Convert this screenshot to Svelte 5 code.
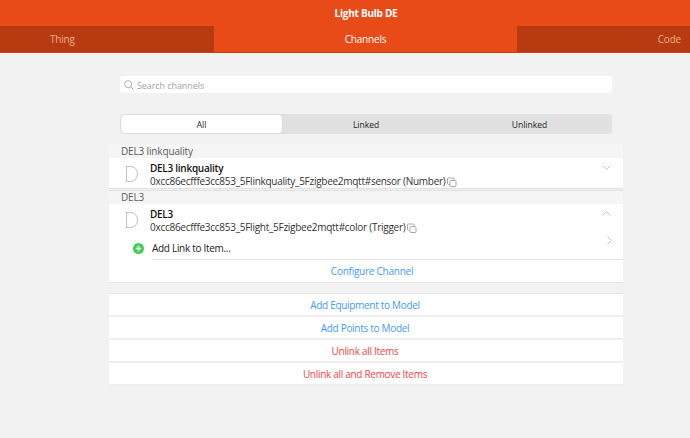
<script>
  const tabs = [
    { label: 'Thing', cls: 'thing' },
    { label: 'Channels', cls: 'active' },
    { label: 'Code', cls: 'code' }
  ];
  const actions = [
    { label: 'Add Equipment to Model', red: false },
    { label: 'Add Points to Model', red: false },
    { label: 'Unlink all Items', red: true },
    { label: 'Unlink all and Remove Items', red: true }
  ];
</script>

{#snippet copyIcon()}
  <svg class="copy" width="10" height="10" viewBox="0 0 10 10" fill="none" stroke="#a8a8a8" stroke-width="1">
    <path d="M2.5 7.5H1.5a1 1 0 0 1-1-1V2a1 1 0 0 1 1-1H6a1 1 0 0 1 1 1v1" />
    <rect x="3" y="3.5" width="6" height="6" rx="1" />
  </svg>
{/snippet}

{#snippet dIcon()}
  <svg class="d" width="14" height="18" viewBox="0 0 14 18" fill="none" stroke="#c4c4c4" stroke-width="1.1">
    <path d="M1.5 1.5h3.5c4.5 0 7.5 3 7.5 7.5s-3 7.5-7.5 7.5H1.5z" />
  </svg>
{/snippet}

<div class="page">
  <header class="title">Light Bulb DE</header>
  <nav class="tabs">
    {#each tabs as t}
      <div class="tab {t.cls}"><span>{t.label}</span></div>
    {/each}
  </nav>

  <div class="search">
    <svg width="10" height="10" viewBox="0 0 10 10" fill="none" stroke="#a3a3a3" stroke-width="0.9">
      <circle cx="4.2" cy="4.2" r="3.5" />
      <path d="M6.8 6.8L9.6 9.6" />
    </svg>
    <span>Search channels</span>
  </div>

  <div class="segments">
    <div class="seg on">All</div>
    <div class="seg">Linked</div>
    <div class="seg">Unlinked</div>
  </div>

  <section class="list">
    <div class="group first">DEL3 linkquality</div>
    <div class="row one">
      {@render dIcon()}
      <div class="txt">
        <div class="name">DEL3 linkquality</div>
        <div class="uid">0xcc86ecfffe3cc853_5Flinkquality_5Fzigbee2mqtt#sensor (Number) {@render copyIcon()}</div>
      </div>
      <svg class="chev" width="9" height="5" viewBox="0 0 9 5" fill="none" stroke="#c8c8c8"><path d="M.5.5l4 4 4-4" /></svg>
    </div>
    <div class="group second">DEL3</div>
    <div class="row two">
      {@render dIcon()}
      <div class="txt">
        <div class="name">DEL3</div>
        <div class="uid">0xcc86ecfffe3cc853_5Flight_5Fzigbee2mqtt#color (Trigger) {@render copyIcon()}</div>
      </div>
      <svg class="chev" width="9" height="5" viewBox="0 0 9 5" fill="none" stroke="#c8c8c8"><path d="M.5 4.5l4-4 4 4" /></svg>
    </div>
    <div class="add">
      <svg width="11" height="11" viewBox="0 0 11 11">
        <circle cx="5.5" cy="5.5" r="5.5" fill="#3bd14f" />
        <path d="M5.5 2.8v5.4M2.8 5.5h5.4" stroke="#fff" stroke-width="1.4" />
      </svg>
      <span>Add Link to Item...</span>
      <svg class="right" width="5" height="9" viewBox="0 0 5 9" fill="none" stroke="#c8c8c8"><path d="M.5.5l4 4-4 4" /></svg>
    </div>
    <div class="configure"><span>Configure Channel</span></div>
  </section>

  <section class="actions">
    {#each actions as a}
      <div class="action" class:red={a.red}>{a.label}</div>
    {/each}
  </section>
</div>

<style>
  :global(body) {
    margin: 0;
    background: #f2f2f2;
  }
  .page {
    width: 690px;
    height: 438px;
    overflow: hidden;
    background: #f2f2f2;
    font-family: "Open Sans", "Noto Sans", sans-serif;
    font-size: 10px;
    color: #1c1c1c;
  }
  .title {
    height: 26px;
    background: #e84b17;
    color: #fff;
    font-weight: 700;
    font-size: 10px;
    letter-spacing: -0.25px;
    line-height: 26px;
    text-align: center;
    padding-left: 42px;
    box-sizing: border-box;
  }
  .tabs {
    display: grid;
    grid-template-columns: 214px 303px 173px;
    height: 27px;
    border-bottom: 1px solid #cf4010;
    box-sizing: border-box;
  }
  .tab {
    display: flex;
    align-items: center;
    font-size: 10px;
    letter-spacing: -0.2px;
    background: #b83a11;
    color: #e8b08c;
  }
  .thing { padding-left: 50px; }
  .active {
    justify-content: center;
    background: #e84b17;
    color: #fff;
  }
  .code {
    justify-content: flex-end;
    padding-right: 9px;
  }
  .search {
    display: flex;
    align-items: center;
    gap: 3px;
    height: 17px;
    margin: 23px 78px 0 120px;
    padding-left: 4px;
    padding-top: 1px;
    box-sizing: border-box;
    background: #fff;
    border-radius: 3px;
    color: #a3a3a3;
    font-size: 9px;
    letter-spacing: -0.08px;
  }
  .segments {
    display: grid;
    grid-template-columns: 163px 1fr 163px;
    height: 20px;
    margin: 21px 78px 0 120px;
    padding: 1px;
    box-sizing: border-box;
    background: #e1e1e1;
    border-radius: 4px;
    font-size: 8.5px;
    color: #222;
  }
  .seg {
    display: flex;
    align-items: center;
    justify-content: center;
  }
  .seg.on {
    background: #fff;
    border-radius: 3px;
    box-shadow: 0 0 1px #aaa;
    margin-right: 2px;
  }
  .list {
    margin: 10px 67px 0 109px;
  }
  .group {
    background: #f5f5f5;
    color: #5c5c5c;
    line-height: 14px;
    font-size: 10px;
    letter-spacing: -0.15px;
    padding-left: 12px;
    height: 14px;
  }
  .second {
    height: 13px;
    line-height: 12px;
    border-top: 1px solid #e0e0e0;
    margin-top: 1px;
  }
  .row {
    display: flex;
    background: #fff;
    position: relative;
    padding-left: 16px;
    box-sizing: border-box;
  }
  .row.one {
    height: 31px;
    border-bottom: 1px solid #e0e0e0;
  }
  .row.two { height: 33px; }
  .d { margin-top: 7px; }
  .txt {
    margin-left: 11px;
    padding-top: 3px;
  }
  .name {
    font-weight: 600;
    font-size: 10px;
    color: #111;
    line-height: 14px;
    letter-spacing: -0.27px;
  }
  .uid {
    display: flex;
    align-items: center;
    gap: 2px;
    line-height: 13px;
    font-size: 10px;
    letter-spacing: -0.27px;
    color: #333;
    white-space: nowrap;
  }
  .copy { margin-top: 1px; }
  .chev {
    position: absolute;
    right: 12px;
    top: 7px;
  }
  .add {
    display: flex;
    align-items: center;
    position: relative;
    height: 22px;
    background: #fff;
    padding-left: 24px;
    gap: 8px;
    letter-spacing: -0.3px;
    color: #222;
  }
  .right {
    position: absolute;
    right: 11px;
    top: -1px;
  }
  .configure {
    background: #fff;
    height: 24px;
    box-sizing: border-box;
    border-bottom: 1px solid #e4e4e4;
    position: relative;
    color: #3f9bf5;
    text-align: center;
    line-height: 24px;
    letter-spacing: -0.25px;
    padding-left: 12px;
  }
  .configure::before {
    content: "";
    position: absolute;
    left: 43px;
    right: 0;
    top: 0;
    border-top: 1px solid #e4e4e4;
  }
  .actions {
    margin: 10px 67px 0 109px;
    border-top: 1px solid #e4e4e4;
  }
  .action {
    height: 23px;
    box-sizing: border-box;
    background: #fff;
    border-bottom: 2px solid #eeeeee;
    color: #3f9bf5;
    text-align: center;
    line-height: 23px;
    letter-spacing: -0.3px;
    padding-right: 2px;
  }
  .action.red { color: #f9433f; }
</style>
